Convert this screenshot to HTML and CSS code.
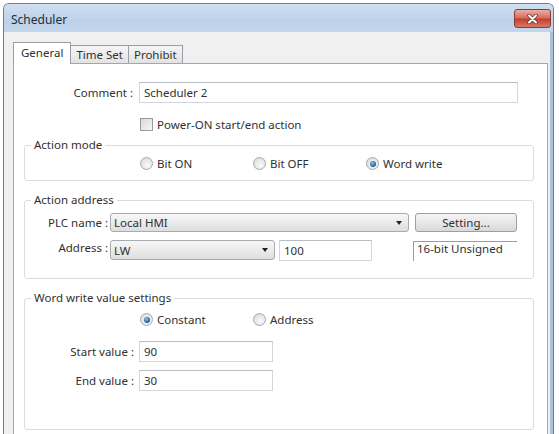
FILE: index.html
```html
<!DOCTYPE html>
<html lang="en">
<head>
  <meta charset="UTF-8">
  <title>Scheduler</title>
  <link rel="stylesheet" href="styles.css">
</head>
<body>

  <div class="window">
    <div class="titlebar">
      <span class="title">Scheduler</span>
      <span class="close">
        <svg width="11" height="10" viewBox="0 0 11 10">
          <path d="M2 1.5 L9 8.5 M9 1.5 L2 8.5" stroke="#6b2a22" stroke-width="3.4" stroke-linecap="round"/>
          <path d="M2 1.5 L9 8.5 M9 1.5 L2 8.5" stroke="#fff" stroke-width="2" stroke-linecap="round"/>
        </svg>
      </span>
    </div>

    <div class="client">
      <!-- tab strip -->
      <div class="tabs">
        <div class="tab active">General</div>
        <div class="tab">Time Set</div>
        <div class="tab">Prohibit</div>
      </div>

      <div class="panel">
        <div class="row comment-row">
          <span class="lbl">Comment :</span>
          <div class="field comment-field">Scheduler 2</div>
        </div>

        <div class="check-row">
          <span class="checkbox"></span>Power-ON start/end action
        </div>

        <!-- Action mode -->
        <fieldset class="group mode-group">
          <legend>Action mode</legend>
          <div class="radios">
            <span class="opt"><span class="radio"></span>Bit ON</span>
            <span class="opt"><span class="radio"></span>Bit OFF</span>
            <span class="opt"><span class="radio on"></span>Word write</span>
          </div>
        </fieldset>

        <!-- Action address -->
        <fieldset class="group addr-group">
          <legend>Action address</legend>
          <div class="row plc-row">
            <span class="lbl addr-lbl">PLC name :</span>
            <div class="combo plc-combo"><span>Local HMI</span><span class="arrow"></span></div>
            <div class="btn">Setting...</div>
          </div>
          <div class="row address-row">
            <span class="lbl addr-lbl">Address :</span>
            <div class="combo dev-combo"><span>LW</span><span class="arrow"></span></div>
            <div class="field num-field">100</div>
            <div class="static">16-bit Unsigned</div>
          </div>
        </fieldset>

        <!-- Word write value settings -->
        <fieldset class="group value-group">
          <legend>Word write value settings</legend>
          <div class="radios">
            <span class="opt"><span class="radio on"></span>Constant</span>
            <span class="opt"><span class="radio"></span>Address</span>
          </div>
          <div class="row start-row">
            <span class="lbl value-lbl">Start value :</span>
            <div class="field value-field">90</div>
          </div>
          <div class="row end-row">
            <span class="lbl value-lbl">End value :</span>
            <div class="field value-field">30</div>
          </div>
        </fieldset>
      </div>
    </div>
  </div>

</body>
</html>
```

FILE: styles.css
```css
html, body {
  overflow: hidden;
}
body {
  margin: 0;
  background: #fff;
  font-family: 'Noto Sans', 'Liberation Sans', sans-serif;
  font-size: 11.5px;
  color: #303030;
}
.window {
  margin: 3px 0 0 3px;
  width: 549px;
  border: 1px solid #6d7e90;
  border-bottom: none;
  border-radius: 6px 6px 0 0;
  background: #f0f0f0;
}
.titlebar {
  height: 28px;
  display: flex;
  justify-content: space-between;
  align-items: flex-start;
  background: linear-gradient(#d0e0f1, #bcd1e8 60%, #c2d6eb);
  border-radius: 5px 5px 0 0;
}
.title {
  padding: 7px 0 0 7px;
  font-size: 12px;
  color: #1c2d40;
}
.close {
  margin: 5px 2px 0 0;
  width: 35px;
  height: 17px;
  border: 1px solid #8a3b31;
  border-radius: 3px;
  background: linear-gradient(#eab0a6, #d86c5d 45%, #c2402f 55%, #d87a68);
  display: flex;
  align-items: center;
  justify-content: center;
}
.client {
  padding: 10px 2px 12px 9px;
  border-right: 3px solid #a8c3dc;
}
.tabs {
  display: flex;
  align-items: flex-end;
}
.tab {
  height: 17px;
  line-height: 17px;
  padding: 0 5px;
  border: 1px solid #9a9da4;
  border-bottom: none;
  margin-right: -1px;
  background: linear-gradient(#f5f5f5, #e2e2e2);
}
.tab.active {
  position: relative;
  z-index: 1;
  height: 21px;
  line-height: 19px;
  padding: 0 7px;
  margin-bottom: -1px;
  background: #fff;
}
.panel {
  border: 1px solid #a3a6ad;
  background: #fff;
  padding: 18px 0 20px 0;
}
.row {
  display: flex;
  align-items: center;
}
.lbl {
  text-align: right;
  white-space: nowrap;
}
.comment-row .lbl {
  width: 119px;
  margin-right: 6px;
}
.field {
  height: 19px;
  line-height: 19px;
  padding: 0 4px;
  border: 1px solid #d2d6dc;
  border-top-color: #b9bec5;
  background: #fff;
  box-sizing: content-box;
  white-space: nowrap;
}
.comment-field {
  width: 369px;
}
.check-row {
  display: flex;
  align-items: center;
  height: 13px;
  margin: 15px 0 0 126px;
}
.checkbox {
  width: 11px;
  height: 11px;
  border: 1px solid #9a9a9a;
  background: linear-gradient(135deg, #d9d9d9, #f6f6f6);
  margin-right: 4px;
}
.group {
  margin: 0 13px 0 10px;
  padding: 0;
  min-width: 0;
  border: 1px solid #d9dde2;
  border-radius: 3px;
}
.group legend {
  margin-left: 6px;
  padding: 0 3px;
  line-height: 14px;
}
.mode-group {
  margin-top: 7px;
  padding: 5px 0 10px;
}
.addr-group {
  margin-top: 12px;
  padding: 6px 0 17px;
}
.value-group {
  margin-top: 12px;
  padding: 8px 0 38px;
}
.radios {
  display: flex;
  height: 13px;
  padding-left: 115px;
}
.opt {
  display: flex;
  align-items: center;
  width: 113px;
  white-space: nowrap;
}
.radio {
  width: 11px;
  height: 11px;
  border: 1px solid #a4a9ae;
  border-radius: 50%;
  background: radial-gradient(circle at 60% 65%, #fafafa, #d6d6d6);
  margin-right: 4px;
  display: flex;
  align-items: center;
  justify-content: center;
}
.radio.on::after {
  content: "";
  width: 6px;
  height: 6px;
  border-radius: 50%;
  background: radial-gradient(circle at 40% 35%, #8cc0ea, #1d5b91 70%);
}
.addr-lbl {
  width: 83px;
  margin-right: 2px;
}
.combo {
  height: 17px;
  padding: 0 6px 0 3px;
  border: 1px solid #a9abaf;
  border-radius: 3px;
  background: linear-gradient(#f7f7f7, #ebebeb 50%, #dedede);
  display: flex;
  align-items: center;
  justify-content: space-between;
  box-sizing: content-box;
}
.plc-row {
  height: 19px;
}
.plc-combo {
  width: 288px;
}
.dev-combo {
  width: 154px;
  height: 18px;
}
.arrow {
  width: 0;
  height: 0;
  border-left: 3px solid transparent;
  border-right: 3px solid transparent;
  border-top: 4px solid #222;
}
.btn {
  margin-left: 6px;
  width: 100px;
  height: 17px;
  line-height: 17px;
  text-align: center;
  border: 1px solid #9d9fa3;
  border-radius: 3px;
  background: linear-gradient(#f4f4f4, #e8e8e8 50%, #d8d8d8);
}
.address-row {
  margin-top: 8px;
  align-items: flex-start;
}
.num-field {
  margin-left: 4px;
  width: 83px;
}
.static {
  margin: 1px 0 0 41px;
  width: 100px;
  height: 19px;
  padding-left: 3px;
  line-height: 13px;
  border-left: 1px solid #9c9c9c;
  border-top: 1px solid #9c9c9c;
  white-space: nowrap;
}
.value-lbl {
  width: 109px;
  margin-right: 5px;
}
.value-field {
  width: 124px;
}
.start-row {
  margin-top: 15px;
}
.end-row {
  margin-top: 8px;
}
```
